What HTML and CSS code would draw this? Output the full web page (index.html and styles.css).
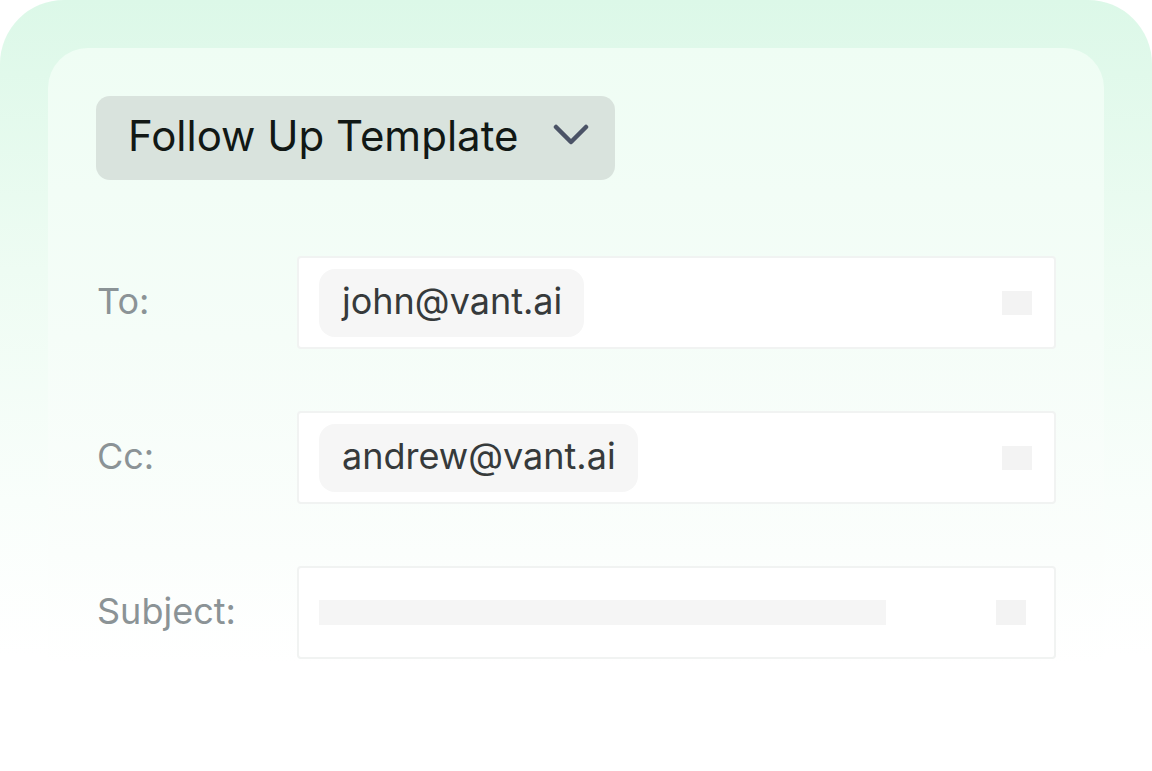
FILE: index.html
```html
<!DOCTYPE html>
<html>
<head>
<meta charset="utf-8">
<link rel="stylesheet" href="styles.css">
</head>
<body>
<div class="outer">
  <div class="inner">
    <button class="template">
      <span>Follow Up Template</span>
      <svg class="chev" width="36" height="24" viewBox="0 0 36 24"><path d="M3 4 L18 19 L33 4" fill="none" stroke="#4b5366" stroke-width="4.5" stroke-linecap="round" stroke-linejoin="round"/></svg>
    </button>
    <div class="fields">
      <div class="row">
        <div class="label">To:</div>
        <div class="input">
          <span class="chip">john@vant.ai</span>
          <span class="sq"></span>
        </div>
      </div>
      <div class="row">
        <div class="label">Cc:</div>
        <div class="input">
          <span class="chip">andrew@vant.ai</span>
          <span class="sq"></span>
        </div>
      </div>
      <div class="row">
        <div class="label">Subject:</div>
        <div class="input subj">
          <span class="bar"></span>
          <span class="sq"></span>
        </div>
      </div>
    </div>
  </div>
</div>
</body>
</html>
```
FILE: styles.css
```css
html, body {
  margin: 0;
  padding: 0;
  background: #ffffff;
}
body {
  width: 1152px;
  height: 771px;
  overflow: hidden;
  font-family: Inter, "Noto Sans", sans-serif;
}
.outer {
  height: 771px;
  box-sizing: border-box;
  padding: 48px 48px 0 48px;
  border-radius: 64px 64px 0 0;
  background: linear-gradient(180deg, #dcf8e8 0%, #eefcf3 35%, #f9fefb 65%, #ffffff 85%);
}
.inner {
  height: 723px;
  box-sizing: border-box;
  padding: 48px 48px 0 48px;
  border-radius: 40px 40px 0 0;
  background: linear-gradient(180deg, #effdf4 0%, #f5fdf8 40%, #fbfefc 70%, #ffffff 85%);
}
.template {
  display: flex;
  align-items: center;
  justify-content: space-between;
  height: 84px;
  width: 519px;
  box-sizing: border-box;
  padding: 0 26px 6px 32px;
  border: none;
  border-radius: 14px;
  background: #d9e3dd;
  font-family: Inter, "Noto Sans", sans-serif;
  font-size: 42px;
  color: #111815;
  white-space: nowrap;
  cursor: pointer;
}
.chev { flex: none; }
.fields {
  display: flex;
  flex-direction: column;
  gap: 62px;
  margin-top: 76px;
}
.row {
  display: flex;
  align-items: center;
}
.label {
  width: 200px;
  font-size: 36px;
  color: #8b9396;
  padding-left: 1px;
  padding-bottom: 4px;
}
.input {
  width: 759px;
  height: 93px;
  box-sizing: border-box;
  border: 2px solid #f1f3f2;
  border-radius: 4px;
  background: #ffffff;
  display: flex;
  align-items: center;
  justify-content: space-between;
  padding: 0 22px 0 20px;
}
.chip {
  background: #f6f6f6;
  border-radius: 16px;
  height: 68px;
  box-sizing: border-box;
  display: flex;
  align-items: center;
  padding: 0 22px 3px 23px;
  font-size: 36px;
  color: #363a3b;
}
.sq {
  width: 30px;
  height: 24px;
  background: #f3f3f3;
}
.subj .bar {
  width: 567px;
  height: 25px;
  background: #f5f5f5;
}
.subj .sq {
  height: 25px;
  margin-right: 6px;
}
```
